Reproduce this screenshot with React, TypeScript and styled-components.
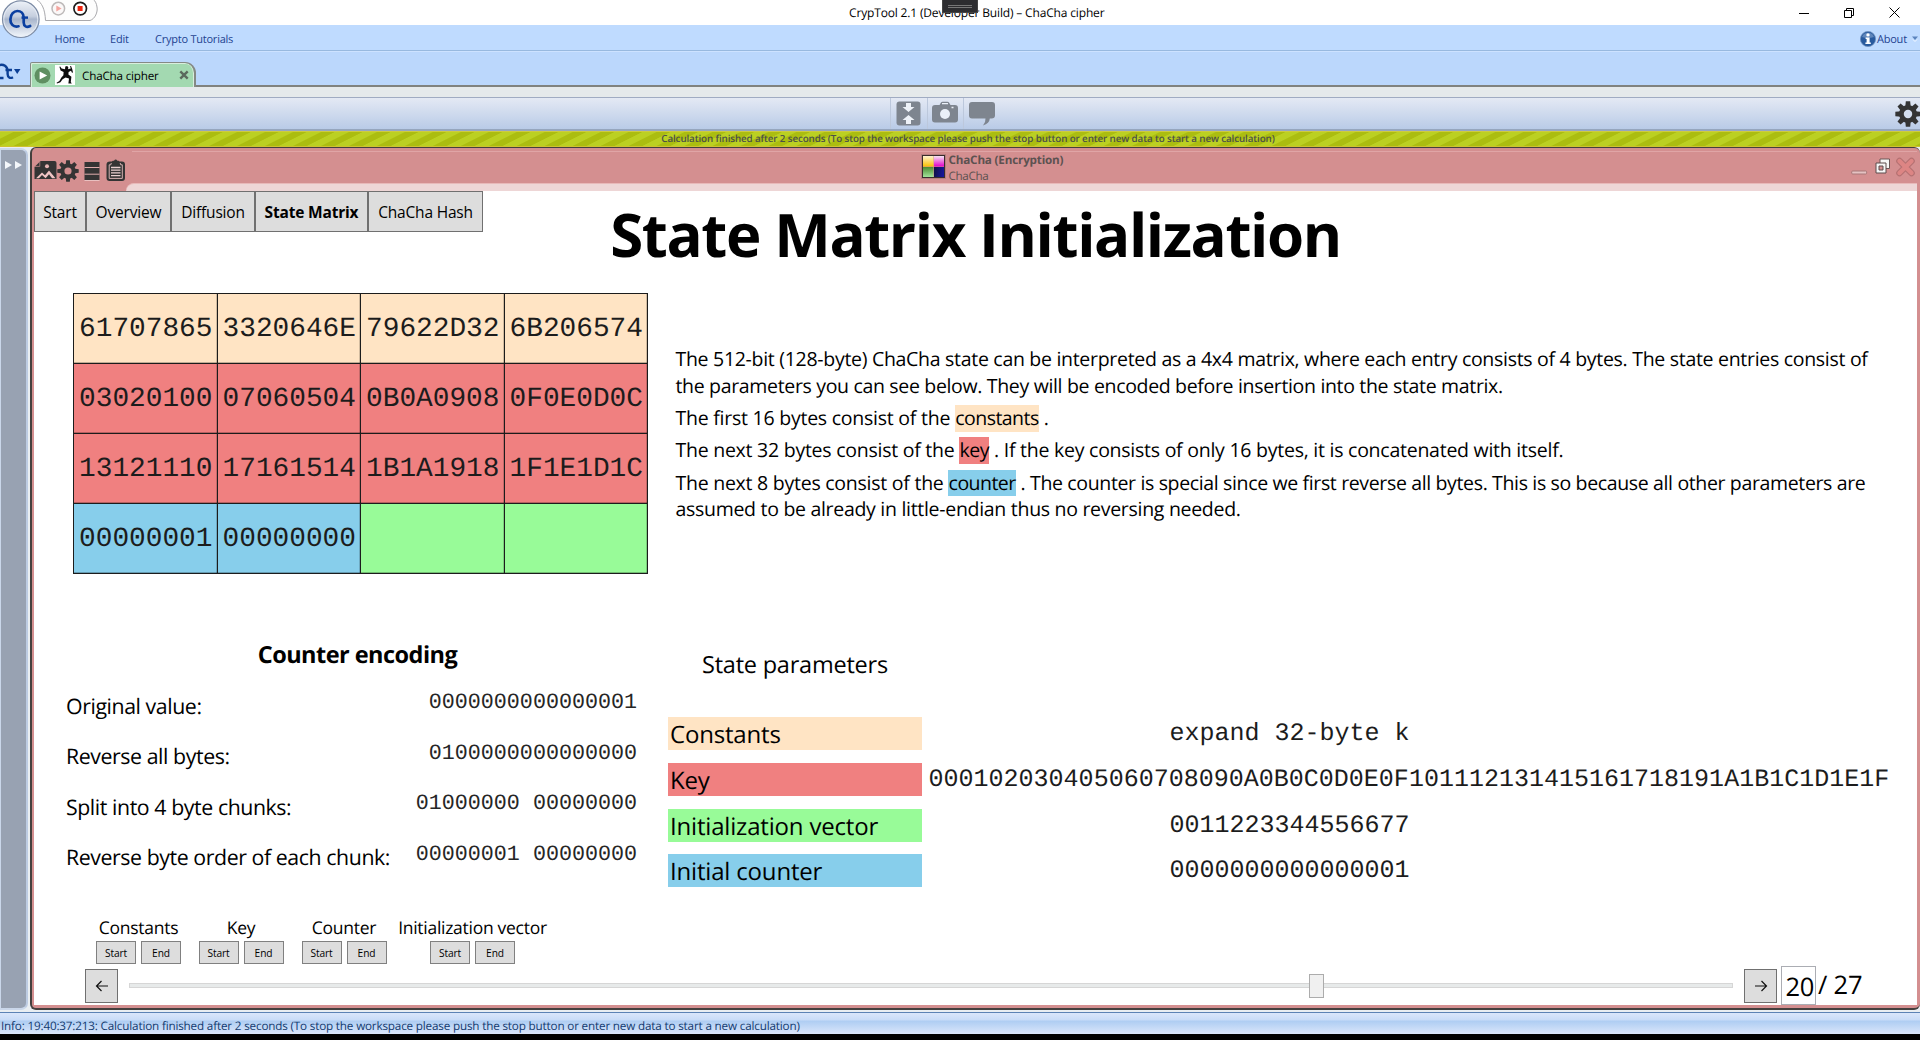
import React from "react";
import styled, { createGlobalStyle, css } from "styled-components";

const sans = css`font-family: "Open Sans", "Noto Sans", sans-serif;`;
const mono = css`font-family: "Liberation Mono", monospace;`;

const palette = {
  constants: "#ffe4c4",
  key: "#f08080",
  iv: "#98fb98",
  counter: "#87ceeb",
  pink: "#d48f90",
  paleGreyButton: "#dddddd",
};

const Global = createGlobalStyle`
  * { box-sizing: border-box; }
  body { margin: 0; background: #000; overflow: hidden; }
`;

const Window = styled.div`
  ${sans}
  width: 1920px;
  height: 1040px;
  display: flex;
  flex-direction: column;
  background: #000;
  color: #000;
  white-space: pre;
  overflow: hidden;
  text-rendering: geometricPrecision;
`;

/* ---------- title bar ---------- */
const TitleBar = styled.header`
  position: relative;
  flex: none;
  height: 25px;
  display: grid;
  grid-template-columns: 849px 1fr 121px;
  align-items: center;
  background: #fff;
`;
const Title = styled.div`
  grid-column: 2;
  font-size: 12px;
  line-height: 25px;
  letter-spacing: -0.16px;
`;
const CaptionButtons = styled.div`
  display: flex;
  gap: 35px;
  height: 22px;
  align-items: center;
  svg { display: block; }
`;
const Handle = styled.div`
  position: absolute;
  left: 942px;
  top: 0;
  width: 36px;
  height: 13px;
  background: #2d2d30;
  border: 1px solid #444;
  border-top: 0;
  display: flex;
  flex-direction: column;
  align-items: center;
  justify-content: center;
  gap: 1px;
  &::before, &::after { content: ""; width: 24px; height: 1px; background: #777; }
`;
const Orb = styled.svg`
  position: absolute;
  left: 0;
  top: 0;
  z-index: 2;
`;

/* ---------- ribbon ---------- */
const MenuBar = styled.nav`
  flex: none;
  height: 26px;
  padding: 3px 2px 0 54.5px;
  display: flex;
  align-items: center;
  background: #bfdbff;
  border-bottom: 1px solid #98b9df;
  color: #1e4391;
  font-size: 11px;
  letter-spacing: -0.23px;
`;
const MenuItem = styled.span<{ $w: number }>`
  width: ${(p) => p.$w}px;
`;
const AboutItem = styled.span`
  margin-left: auto;
  display: flex;
  align-items: center;
  gap: 1px;
  svg { margin-top: -1px; }
`;
const TabStrip = styled.div`
  flex: none;
  height: 36px;
  display: flex;
  align-items: flex-end;
  background: #bbd7fc;
  border-top: 1px solid #cde2ff;
  box-shadow: inset 0 -2px 0 #80827f;
`;
const TabLogo = styled.svg`
  flex: none;
  display: block;
  margin-bottom: 5px;
`;
const DocTab = styled.div`
  width: 166px;
  height: 25px;
  margin-left: 8px;
  padding: 0 5px 0 3px;
  display: flex;
  align-items: center;
  background: #a3d9b1;
  border: 2px solid #858985;
  border-width: 1px 2px 0 1px;
  box-shadow: inset 1px 1px 0 #d8eedd, inset -1px 0 0 #d8eedd;
  border-radius: 2px 11px 0 0;
  font-size: 11.7px;
  letter-spacing: -0.2px;
`;
const DocTabText = styled.span`
  margin-left: 7px;
  width: 97px;
  padding-top: 2px;
`;
const Spacer = styled.div`
  flex: none;
  height: 10px;
  background: #e5e9eb;
`;
const Toolbar = styled.div`
  flex: none;
  height: 34px;
  display: flex;
  justify-content: space-between;
  padding-left: 890px;
  background: linear-gradient(#e4e9f4, #b9cbe7);
  border-top: 1px solid #a0abc2;
  border-bottom: 2px solid #96a6bd;
`;
const ToolGroup = styled.div`
  display: flex;
`;
const Tool = styled.div`
  width: 36.5px;
  border-left: 1px solid #bcc8dc;
  display: flex;
  align-items: center;
  justify-content: center;
`;
const GearTool = styled.div`
  width: 25px;
  padding-top: 3px;
  overflow: hidden;
`;
const ProgressStrip = styled.div`
  flex: none;
  height: 16px;
  border-top: 1px solid #cfcb3e;
  border-bottom: 1px solid #cfc22f;
  background: repeating-linear-gradient(153.4deg, #bbd022 0 5.5px, #abbd10 6.5px 11.8px, #bbd022 12.52px);
  text-align: center;
  padding-left: 16px;
  font-size: 9.8px;
  font-weight: 600;
  line-height: 14px;
  letter-spacing: -0.11px;
  color: #4c5048;
`;

/* ---------- workspace ---------- */
const Workspace = styled.main`
  flex: none;
  height: 865px;
  display: flex;
  gap: 2px;
  padding-bottom: 2px;
  background: #e9eef2;
`;
const SideRail = styled.aside`
  width: 28px;
  margin-top: 1px;
  padding: 11px 0 0 4px;
  display: flex;
  gap: 3px;
  background: #98a2b2;
  border: 2px solid #cad7ea;
  border-left-width: 1px;
  border-right-color: #bccbe2;
  border-radius: 0 7px 7px 0;
`;
const Panel = styled.section`
  flex: 1;
  display: flex;
  flex-direction: column;
  background: ${palette.pink};
  border: 2px solid #44403e;
  border-top-width: 1px;
  border-right: 0;
  border-radius: 6px;
  padding: 0 3px 3px 2px;
  overflow: hidden;
`;
const PanelHeader = styled.div`
  flex: none;
  height: 35px;
  display: grid;
  grid-template-columns: 888px 1fr 66px;
  background: linear-gradient(#e0a5a6, #e0a5a6) 98px 3px / 100% 1px no-repeat;
`;
const PluginTools = styled.div`
  display: flex;
  align-items: flex-end;
  height: 34px;
  svg { display: block; flex: none; }
`;
const PluginTitle = styled.div`
  display: flex;
  gap: 3.5px;
  padding-top: 4px;
  color: #5d5251;
  font-size: 11.7px;
  line-height: 16px;
`;
const PluginIcon = styled.div`
  width: 23px;
  height: 23px;
  margin-top: 3px;
  border: 1px solid #3a2c2c;
  outline: 1px solid #b58080;
  background:
    linear-gradient(#fff3d0, #f8c000) 0 0 / 50% 50% no-repeat,
    linear-gradient(#f7e4f4, #e000c8) 100% 0 / 50% 50% no-repeat,
    linear-gradient(#4a8a30, #a5e8a0) 0 100% / 50% 50% no-repeat,
    linear-gradient(100deg, #101040, #1818a8) 100% 100% / 50% 50% no-repeat;
`;
const PluginName = styled.div`
  font-weight: 700;
  letter-spacing: -0.19px;
`;
const PluginKind = styled.div`
  letter-spacing: -0.35px;
`;
const PanelButtons = styled.div`
  display: flex;
  align-items: flex-start;
  padding-top: 9px;
`;
const PaleStrip = styled.div`
  flex: none;
  height: 8px;
  margin-left: 92px;
  background: #eed6d6;
  border-top: 1px solid #e8b9b9;
  border-top-left-radius: 9px;
`;
const Page = styled.div`
  flex: 1;
  display: flex;
  flex-direction: column;
  background: #fff;
`;

/* ---------- page header ---------- */
const PageHeader = styled.div`
  flex: none;
  height: 102px;
  display: grid;
  align-items: start;
  > * { grid-area: 1 / 1; }
`;
const TabButtons = styled.div`
  display: flex;
`;
const TabButton = styled.button<{ $w: number; $active?: boolean }>`
  ${sans}
  width: ${(p) => p.$w}px;
  height: 41px;
  padding: 0;
  border: 1px solid #707070;
  background: ${palette.paleGreyButton};
  color: #000;
  font-size: 15.5px;
  letter-spacing: -0.18px;
  font-weight: ${(p) => (p.$active ? 700 : 400)};
`;
const Heading = styled.h1`
  margin: 3px 0 0;
  text-align: center;
  font-size: 60px;
  line-height: 80px;
  font-weight: 700;
  letter-spacing: -1.4px;
`;

/* ---------- matrix and description ---------- */
const Upper = styled.div`
  flex: none;
  height: 282px;
  display: flex;
  padding-left: 39px;
`;
const Matrix = styled.div`
  width: 575px;
  height: 281px;
  padding: 1px;
  display: grid;
  grid-template-columns: repeat(4, 1fr);
  grid-template-rows: repeat(4, 1fr);
  gap: 1px;
  background: #1c1c1c;
`;
const MatrixCell = styled.div<{ $fill: string }>`
  ${mono}
  background: ${(p) => p.$fill};
  box-shadow: inset 0 -1px 0 rgba(0, 0, 0, 0.25), inset -1px 0 0 rgba(0, 0, 0, 0.18);
  padding-left: 1px;
  text-align: center;
  font-size: 27.8px;
  line-height: 71px;
  height: 69px;
  color: #1c1c1c;
`;
const Description = styled.div`
  margin-left: 27.5px;
  padding-top: 53px;
  display: flex;
  flex-direction: column;
  gap: 5.8px;
  font-size: 19.5px;
  line-height: 26.6px;
`;
const Paragraph = styled.p`
  margin: 0;
`;
const Phrase = styled.span<{ $ls: number }>`
  letter-spacing: ${(p) => p.$ls}px;
`;
const Mark = styled.span<{ $fill: string; $w: number }>`
  display: inline-block;
  width: ${(p) => p.$w}px;
  background: ${(p) => p.$fill};
  text-align: center;
  letter-spacing: -0.55px;
  vertical-align: top;
`;

/* ---------- encoding and parameters ---------- */
const Lower = styled.div`
  flex: none;
  height: 340px;
  display: flex;
  gap: 19px;
  padding-left: 32px;
`;
const Encoding = styled.div`
  width: 583px;
  padding-top: 59px;
`;
const EncodingTitle = styled.h2`
  margin: 0 0 7.5px;
  text-align: center;
  font-size: 23.5px;
  line-height: 40px;
  letter-spacing: -0.53px;
`;
const EncodingRow = styled.div`
  height: 50.67px;
  display: flex;
  justify-content: space-between;
  padding-right: 12px;
  line-height: 50.67px;
`;
const EncodingLabel = styled.span`
  font-size: 21.3px;
  letter-spacing: -0.42px;
`;
const EncodingValue = styled.span`
  ${mono}
  margin-top: -3.5px;
  font-size: 21.7px;
  color: #262626;
`;
const Parameters = styled.div`
  flex: 1;
  padding-top: 69px;
`;
const ParametersTitle = styled.h2`
  margin: 0 0 33px 34px;
  font-size: 23.5px;
  font-weight: 400;
  line-height: 40px;
  letter-spacing: -0.22px;
`;
const ParameterRow = styled.div`
  height: 45.8px;
  display: grid;
  grid-template-columns: 254px 735px;
`;
const ParameterLabel = styled.div<{ $fill: string }>`
  height: 33px;
  padding-left: 2px;
  background: ${(p) => p.$fill};
  font-size: 24px;
  line-height: 35px;
  letter-spacing: -0.18px;
`;
const ParameterValue = styled.div<{ $long?: boolean }>`
  ${mono}
  padding-left: ${(p) => (p.$long ? 6.5 : 0)}px;
  text-align: ${(p) => (p.$long ? "left" : "center")};
  font-size: 25.03px;
  line-height: 33px;
  color: #1c1c1c;
`;

/* ---------- navigation ---------- */
const Jumps = styled.div`
  flex: none;
  height: 51px;
  display: flex;
  gap: 17px;
  padding-left: 62px;
`;
const JumpGroup = styled.div<{ $w: number; $shift?: number }>`
  width: ${(p) => p.$w}px;
  margin-left: ${(p) => p.$shift ?? 0}px;
  display: flex;
  flex-direction: column;
  align-items: center;
`;
const JumpLabel = styled.div`
  height: 26px;
  font-size: 17.5px;
  line-height: 26px;
  letter-spacing: -0.28px;
`;
const JumpButtons = styled.div`
  display: flex;
  gap: 5px;
`;
const JumpButton = styled.button`
  ${sans}
  width: 40px;
  height: 23px;
  padding: 0;
  border: 1px solid #808080;
  background: ${palette.paleGreyButton};
  color: #000;
  font-size: 10.2px;
  letter-spacing: -0.1px;
`;
const Rail = styled.div`
  flex: 1;
  display: flex;
  align-items: center;
  padding-left: 51px;
`;
const StepButton = styled.button`
  width: 33px;
  height: 34px;
  padding: 0;
  display: grid;
  place-items: center;
  border: 1px solid #707070;
  background: ${palette.paleGreyButton};
`;
const Track = styled.div`
  position: relative;
  width: 1604px;
  height: 5px;
  margin: 0 11px;
  background: #e7eaea;
  border: 1px solid #d6d6d6;
`;
const Thumb = styled.div`
  position: absolute;
  top: -10px;
  width: 15px;
  height: 24px;
  margin-left: -8px;
  background: #f0f0f0;
  border: 1px solid #acacac;
`;
const StepBox = styled.div`
  width: 35px;
  height: 39px;
  margin-left: 4px;
  padding-left: 3.5px;
  border: 1px solid #abadb3;
  font-size: 25.5px;
  line-height: 40px;
  letter-spacing: -0.4px;
`;
const StepTotal = styled.div`
  margin-left: 2px;
  font-size: 25.5px;
  line-height: 37px;
  letter-spacing: -0.2px;
`;

const StatusBar = styled.footer`
  flex: none;
  height: 22px;
  padding: 5px 0 0 1px;
  border-top: 1px solid #5c83b5;
  background: linear-gradient(#dae7fb 0, #c9dcf8 7px, #aecdf3 8px, #dbe6fa 21px);
  color: #123a70;
  font-size: 11.7px;
  line-height: 16px;
  letter-spacing: -0.17px;
`;

/* ---------- drawings ---------- */
const gearTeeth = [0, 45, 90, 135, 180, 225, 270, 315];
const Gear = ({ size, hole }: { size: number; hole: string }) => (
  <svg width={size} height={size} viewBox="0 0 24 24">
    <g fill="#343434">
      <circle cx="12" cy="12" r="8.3" />
      {gearTeeth.map((a) => (
        <path key={a} d="M9.4 6 L10 0.3 H14 L14.6 6 Z" transform={`rotate(${a} 12 12)`} />
      ))}
    </g>
    <circle cx="12" cy="12" r="3.9" fill={hole} />
  </svg>
);

const OrbLogo = () => (
  <Orb width="100" height="40" viewBox="0 0 100 40">
    <defs>
      <linearGradient id="orb" x1="0" y1="0" x2="0" y2="1">
        <stop offset="0" stopColor="#eef2f8" />
        <stop offset="0.42" stopColor="#c6cfdf" />
        <stop offset="0.5" stopColor="#a9b6cc" />
        <stop offset="1" stopColor="#f4f8fd" />
      </linearGradient>
    </defs>
    <path d="M36 -1 C42 3 45 9 45.5 20.5 H90 C95 19 98 12 97 7 C96.5 3 95 1 93 -1" fill="#fdfdfd" stroke="#a9a9ad" />
    <circle cx="58.3" cy="8.6" r="6.3" fill="#fbf8f8" stroke="#bdb9b9" strokeWidth="1.5" />
    <path d="M56.3 5.6 L61.6 8.6 L56.3 11.6 Z" fill="#f3a6a0" />
    <circle cx="80.2" cy="8.6" r="6.3" fill="#fff" stroke="#1c1c1c" strokeWidth="1.7" />
    <rect x="77.6" y="6" width="5" height="5" fill="#ee2410" />
    <circle cx="20.8" cy="19.2" r="18.3" fill="url(#orb)" stroke="#7e8da6" strokeWidth="1.2" />
    <circle cx="20.8" cy="19.2" r="17" fill="none" stroke="#e9eef6" strokeWidth="0.9" />
    <path d="M18.5 26.3 C13 27.6 10.2 23.5 10.4 19.2 C10.6 14 14 11 17.3 11 C21 11 23.6 13.6 23.7 17.5 V22.5 C23.8 26.5 26.5 27.8 30.2 26" fill="none" stroke="#0b3fa0" strokeWidth="2.7" strokeLinecap="round" />
    <path d="M21.5 17.6 H28" stroke="#0b3fa0" strokeWidth="2.4" />
  </Orb>
);

const InfoIcon = () => (
  <svg width="16" height="16" viewBox="0 0 16 16">
    <circle cx="8" cy="8" r="7.6" fill="#285a9e" stroke="#6e8fbd" strokeWidth="0.8" />
    <path d="M2 6 A6.4 6.4 0 0 1 14 6 Q8 8 2 6" fill="#5f86bb" />
    <circle cx="8" cy="3.9" r="1.7" fill="#fff" />
    <path d="M5.6 6.4 H9.6 V11.4 H10.8 V13 H5.4 V11.4 H6.6 V8 H5.6 Z" fill="#fff" />
  </svg>
);

const PlayBadge = () => (
  <svg width="17" height="17" viewBox="0 0 17 17">
    <circle cx="8.5" cy="8.5" r="8" fill="#5f8f62" />
    <path d="M5.6 4.4 L13.2 8.5 L5.6 12.6 Z" fill="#fff" />
  </svg>
);

const DancerArt = styled.svg`
  margin-left: 4px;
`;
const Dancer = () => (
  <DancerArt width="20" height="20" viewBox="0 0 20 20">
    <rect width="20" height="20" fill="#fff" />
    <path d="M5.2 1.6 L6.6 3.6 L10 4.2 L10.3 1.6 L12.2 0.9 L13.4 2.4 L13 4.2 L15.8 3.6 L15 1.2 L16 0.9 L17.2 4 L18 7.4 L17 7.8 L16 5.8 L13.6 7 L13.4 9.4 L16.4 11.8 L15.8 17 L16.8 18.4 L13.4 18.4 L14 13.6 L10.6 12.6 L7.6 14.2 L5.4 17.2 L2 18.6 L1.6 17.8 L4.4 16 L6.4 12.6 L8.4 10.2 L8.6 7 L5.6 5.4 L4.4 1.8 Z" fill="#0c0c0c" />
  </DancerArt>
);

const ImageArt = styled.svg`
  margin-bottom: 2px;
`;
const ImageGlyph = () => (
  <ImageArt width="23" height="20" viewBox="0 0 23 20">
    <path d="M6.5 1 H20.5 Q22.5 1 22.5 3 V19 H0.5 V7 Z" fill="#343434" />
    <path d="M5.8 1.2 V6.4 H0.8" fill="none" stroke="#b98585" strokeWidth="0.8" />
    <circle cx="13" cy="6.3" r="2" fill="#e8b5b5" />
    <path d="M2 18.3 L8 12.5 L11 15.2 L15 10.6 L21.5 18.3 L18 18.3 L15 14.2 L11.6 18.3 L8 15 L5 18.3 Z" fill="#f0c4c4" />
  </ImageArt>
);
const ListArt = styled.svg`
  margin: 0 6px 1px 5px;
`;
const ListGlyph = () => (
  <ListArt width="16" height="20" viewBox="0 0 16 20">
    <rect x="0.5" y="1" width="15" height="18" fill="#343434" />
    <path d="M0.5 6.5 H15.5 M0.5 13.2 H15.5" stroke="#e0adad" strokeWidth="1" />
    <path d="M0.5 19.5 H15.5" stroke="#e9c0c0" strokeWidth="1" />
  </ListArt>
);
const ClipboardArt = styled.svg`
  margin-bottom: 0.5px;
`;
const ClipboardGlyph = () => (
  <ClipboardArt width="20" height="23" viewBox="0 0 20 23">
    <path d="M4 2.5 H5.8 L6.8 1.8 H8 Q9.7 -0.8 11.4 1.8 H12.6 L13.6 2.5 H16 Q19 2.5 19 5.5 V19 Q19 22 16 22 H3.5 Q0.5 22 0.5 19 V5.5 Q0.5 2.5 4 2.5 Z" fill="#343434" />
    <path d="M5.3 4 L4.8 5.8 H3.2 V19.4 H16.3 V5.8 H14.7 L14.2 4" fill="none" stroke="#e5c0c0" strokeWidth="0.9" />
    <path d="M5 8.5 H14.5 M5 11.2 H14.5 M5 13.9 H14.5 M5 16.6 H14.5" stroke="#e8d0d0" strokeWidth="1.3" />
  </ClipboardArt>
);

const Arrow = ({ back }: { back?: boolean }) => (
  <svg width="14" height="14" viewBox="0 0 14 14">
    <path d={back ? "M13 7 H1.5 M6.5 2 L1.5 7 L6.5 12" : "M1 7 H12.5 M7.5 2 L12.5 7 L7.5 12"} fill="none" stroke="#111" strokeWidth="1.2" />
  </svg>
);

/* ---------- data ---------- */
const tabs = [
  { name: "Start", w: 52 },
  { name: "Overview", w: 85 },
  { name: "Diffusion", w: 84 },
  { name: "State Matrix", w: 113, active: true },
  { name: "ChaCha Hash", w: 115 },
];
const matrix: [string, string][] = [
  ["61707865", palette.constants], ["3320646E", palette.constants], ["79622D32", palette.constants], ["6B206574", palette.constants],
  ["03020100", palette.key], ["07060504", palette.key], ["0B0A0908", palette.key], ["0F0E0D0C", palette.key],
  ["13121110", palette.key], ["17161514", palette.key], ["1B1A1918", palette.key], ["1F1E1D1C", palette.key],
  ["00000001", palette.counter], ["00000000", palette.counter], ["", palette.iv], ["", palette.iv],
];
const encoding = [
  ["Original value:", "0000000000000001"],
  ["Reverse all bytes:", "0100000000000000"],
  ["Split into 4 byte chunks:", "01000000 00000000"],
  ["Reverse byte order of each chunk:", "00000001 00000000"],
];
const parameters = [
  { name: "Constants", value: "expand 32-byte k", fill: palette.constants },
  { name: "Key", value: "000102030405060708090A0B0C0D0E0F101112131415161718191A1B1C1D1E1F", fill: palette.key, long: true },
  { name: "Initialization vector", value: "0011223344556677", fill: palette.iv },
  { name: "Initial counter", value: "0000000000000001", fill: palette.counter },
];
const jumps = [
  { name: "Constants", w: 85 },
  { name: "Key", w: 86 },
  { name: "Counter", w: 86 },
  { name: "Initialization vector", w: 151, shift: -7 },
];
const step = 20;
const steps = 27;

export default function App() {
  return (
    <Window>
      <Global />
      <TitleBar>
        <OrbLogo />
        <Title>CrypTool 2.1 (Developer Build) – ChaCha cipher</Title>
        <Handle />
        <CaptionButtons>
          <svg width="10" height="10"><path d="M0 5.5 H10" stroke="#000" /></svg>
          <svg width="10" height="10"><path d="M0.5 2.5 H7.5 V9.5 H0.5 Z M2.5 2.5 V0.5 H9.5 V7.5 H7.5" fill="none" stroke="#000" /></svg>
          <svg width="11" height="11"><path d="M0.5 0.5 L10.5 10.5 M10.5 0.5 L0.5 10.5" stroke="#000" /></svg>
        </CaptionButtons>
      </TitleBar>
      <MenuBar>
        <MenuItem $w={55.5}>Home</MenuItem>
        <MenuItem $w={45}>Edit</MenuItem>
        <MenuItem $w={80}>Crypto Tutorials</MenuItem>
        <AboutItem>
          <InfoIcon />
          <MenuItem $w={34}>About</MenuItem>
          <svg width="6" height="6"><path d="M0 0.5 H6 L3 4 Z" fill="#5b84bd" /><path d="M1 3.5 L3 5.5 L5 3.5" fill="none" stroke="#fff" strokeWidth="0.8" /></svg>
        </AboutItem>
      </MenuBar>
      <TabStrip>
        <TabLogo width="22" height="20" viewBox="0 0 22 20">
          <path d="M-1 3.2 C3.5 1.5 7.6 4.5 7.6 9 V12 C7.7 15.5 10 16.8 13 15.2 M5.5 8 H12 M-1 16 H3.5" fill="none" stroke="#0b3f95" strokeWidth="2.4" />
          <path d="M14 7 H20.5 L17.2 12 Z" fill="#0b3f95" />
        </TabLogo>
        <DocTab>
          <PlayBadge />
          <Dancer />
          <DocTabText>ChaCha cipher</DocTabText>
          <svg width="10" height="10" viewBox="0 0 10 10"><path d="M1.3 1.3 L8.7 8.7 M8.7 1.3 L1.3 8.7" stroke="#5b6a5e" strokeWidth="2.4" /></svg>
        </DocTab>
      </TabStrip>
      <Spacer />
      <Toolbar>
        <ToolGroup>
          <Tool>
            <svg width="25" height="25" viewBox="0 0 25 25">
              <rect x="0.5" y="0.5" width="24" height="24" rx="3" fill="#7e858f" />
              <path d="M10 2 H15 V6 H18.5 L12.5 11 L6.5 6 H10 Z M10 23 H15 V19 H18.5 L12.5 14 L6.5 19 H10 Z" fill="#eef2f8" />
            </svg>
          </Tool>
          <Tool>
            <svg width="26" height="25" viewBox="0 0 26 25">
              <path d="M3 4 H7.5 L9 1.5 Q9.5 0.7 10.5 0.7 H15.5 Q16.5 0.7 17 1.5 L18.5 4 H23 Q26 4 26 7 V18.5 Q26 21.5 23 21.5 H3 Q0 21.5 0 18.5 V7 Q0 4 3 4 Z" fill="#7e858f" />
              <circle cx="13" cy="13" r="5" fill="#eaf0f8" />
              <path d="M10 2.6 H16 M19.5 6.5 H21.5" stroke="#eaf0f8" strokeWidth="1.3" />
            </svg>
          </Tool>
          <Tool>
            <svg width="26" height="25" viewBox="0 0 26 25">
              <path d="M3 1 H23 Q26 1 26 4 V14.5 Q26 17.5 22.5 17.5 H20.8 Q20.5 22.5 14 24.5 Q16.8 21 16.5 17.5 H3 Q0 17.5 0 14.5 V4 Q0 1 3 1 Z" fill="#7e858f" />
            </svg>
          </Tool>
        </ToolGroup>
        <GearTool><Gear size={26} hole="#d3ddee" /></GearTool>
      </Toolbar>
      <ProgressStrip>
        Calculation finished after 2 seconds (To stop the workspace please push the stop button or enter new data to start a new calculation)
      </ProgressStrip>
      <Workspace>
        <SideRail>
          <svg width="7" height="8"><path d="M0 0 L7 4 L0 8 Z" fill="#f4f7fb" /></svg>
          <svg width="7" height="8"><path d="M0 0 L7 4 L0 8 Z" fill="#f4f7fb" /></svg>
        </SideRail>
        <Panel>
          <PanelHeader>
            <PluginTools>
              <ImageGlyph />
              <Gear size={22} hole={palette.pink} />
              <ListGlyph />
              <ClipboardGlyph />
            </PluginTools>
            <PluginTitle>
              <PluginIcon />
              <div>
                <PluginName>ChaCha (Encryption)</PluginName>
                <PluginKind>ChaCha</PluginKind>
              </div>
            </PluginTitle>
            <PanelButtons>
              <svg width="66" height="20" viewBox="0 0 66 20">
                <rect x="0.7" y="14" width="15" height="3" rx="1" fill="#e5c2c2" stroke="#a87878" />
                <path d="M29 2 H38.5 V11.5 H29 Z" fill="#f6f6f6" stroke="#6a5656" />
                <path d="M25 6 H35 V16 H25 Z" fill="#f6f6f6" stroke="#5c4c4c" />
                <path d="M28 9 H32 V13 H28 Z" fill="#d48f90" stroke="#5c4c4c" />
                <path d="M48.5 4 L60.5 16 M60.5 4 L48.5 16" stroke="#b57172" strokeWidth="6.6" strokeLinecap="round" />
                <path d="M48.5 4 L60.5 16 M60.5 4 L48.5 16" stroke="#dd8584" strokeWidth="4.4" strokeLinecap="round" />
              </svg>
            </PanelButtons>
          </PanelHeader>
          <PaleStrip />
          <Page>
            <PageHeader>
              <Heading>State Matrix Initialization</Heading>
              <TabButtons>
                {tabs.map((t) => (
                  <TabButton key={t.name} $w={t.w} $active={t.active}>{t.name}</TabButton>
                ))}
              </TabButtons>
            </PageHeader>
            <Upper>
              <Matrix>
                {matrix.map(([value, fill], i) => (
                  <MatrixCell key={i} $fill={fill}>{value}</MatrixCell>
                ))}
              </Matrix>
              <Description>
                <Paragraph>
                  <Phrase $ls={-0.295}>The 512-bit (128-byte) ChaCha state can be interpreted as a 4x4 matrix, where each entry consists of 4 bytes. The state entries consist of</Phrase>
                  <br />
                  <Phrase $ls={-0.33}>the parameters you can see below. They will be encoded before insertion into the state matrix.</Phrase>
                </Paragraph>
                <Paragraph>
                  <Phrase $ls={-0.24}>The first 16 bytes consist of the </Phrase>
                  <Mark $fill={palette.constants} $w={84}>constants</Mark>
                  <Phrase $ls={-0.2}> .</Phrase>
                </Paragraph>
                <Paragraph>
                  <Phrase $ls={-0.25}>The next 32 bytes consist of the </Phrase>
                  <Mark $fill={palette.key} $w={30}>key</Mark>
                  <Phrase $ls={-0.25}> . If the key consists of only 16 bytes, it is concatenated with itself.</Phrase>
                </Paragraph>
                <Paragraph>
                  <Phrase $ls={-0.25}>The next 8 bytes consist of the </Phrase>
                  <Mark $fill={palette.counter} $w={67.5}>counter</Mark>
                  <Phrase $ls={-0.355}> . The counter is special since we first reverse all bytes. This is so because all other parameters are</Phrase>
                  <br />
                  <Phrase $ls={-0.295}>assumed to be already in little-endian thus no reversing needed.</Phrase>
                </Paragraph>
              </Description>
            </Upper>
            <Lower>
              <Encoding>
                <EncodingTitle>Counter encoding</EncodingTitle>
                {encoding.map(([label, value]) => (
                  <EncodingRow key={label}>
                    <EncodingLabel>{label}</EncodingLabel>
                    <EncodingValue>{value}</EncodingValue>
                  </EncodingRow>
                ))}
              </Encoding>
              <Parameters>
                <ParametersTitle>State parameters</ParametersTitle>
                {parameters.map((p) => (
                  <ParameterRow key={p.name}>
                    <ParameterLabel $fill={p.fill}>{p.name}</ParameterLabel>
                    <ParameterValue $long={p.long}>{p.value}</ParameterValue>
                  </ParameterRow>
                ))}
              </Parameters>
            </Lower>
            <Jumps>
              {jumps.map((j) => (
                <JumpGroup key={j.name} $w={j.w} $shift={j.shift}>
                  <JumpLabel>{j.name}</JumpLabel>
                  <JumpButtons>
                    <JumpButton>Start</JumpButton>
                    <JumpButton>End</JumpButton>
                  </JumpButtons>
                </JumpGroup>
              ))}
            </Jumps>
            <Rail>
              <StepButton><Arrow back /></StepButton>
              <Track><Thumb style={{ left: `${(step / steps) * 100}%` }} /></Track>
              <StepButton><Arrow /></StepButton>
              <StepBox>{step}</StepBox>
              <StepTotal>/ {steps}</StepTotal>
            </Rail>
          </Page>
        </Panel>
      </Workspace>
      <StatusBar>
        Info: 19:40:37:213: Calculation finished after 2 seconds (To stop the workspace please push the stop button or enter new data to start a new calculation)
      </StatusBar>
    </Window>
  );
}
